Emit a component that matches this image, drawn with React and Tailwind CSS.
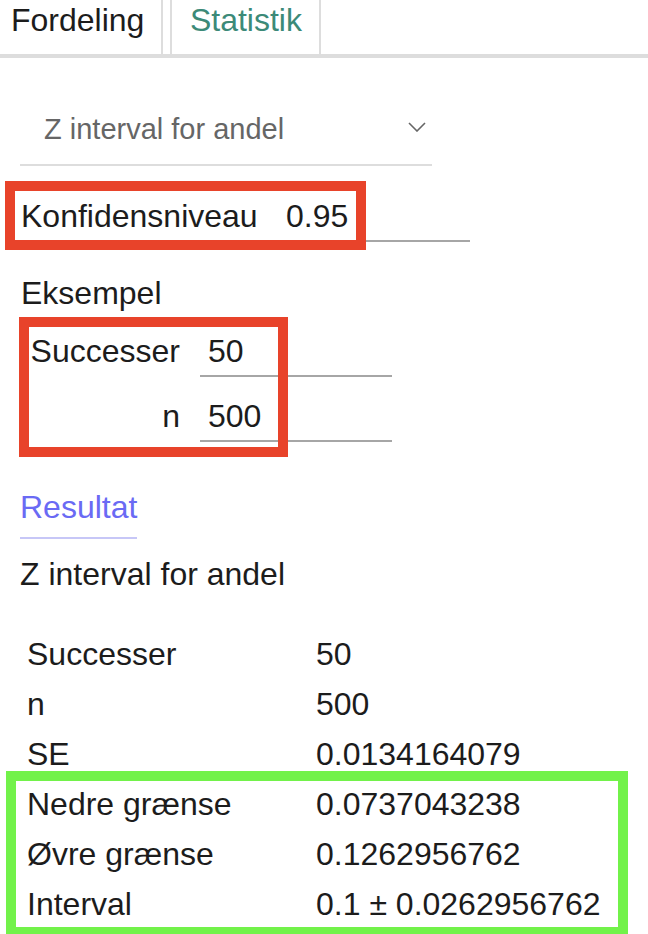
import React from 'react';

const rows = [
  ['Successer', '50'],
  ['n', '500'],
  ['SE', '0.0134164079'],
  ['Nedre grænse', '0.0737043238'],
  ['Øvre grænse', '0.1262956762'],
  ['Interval', '0.1 ± 0.0262956762'],
];

const Field = ({ value }) => (
  <div className="w-[192px] pl-[8px] pb-[4px] leading-[40px] border-b-2 border-[#a6a6a6]">{value}</div>
);

const App = () => {
  return (
    <div className="w-[648px] h-[934px] overflow-hidden bg-white text-[#1c1c1c] text-[32px] font-['Liberation_Sans',Arial,sans-serif]">
      {/* tabs */}
      <div className="flex h-[58px] border-b-4 border-[#dddddd]">
        <div className="pl-[11px] pr-[17px] leading-[40px] border-r-2 border-[#dddddd]">Fordeling</div>
        <div className="ml-[7px] w-[151px] text-center leading-[40px] text-[#3c8a78] border-x-2 border-[#dddddd]">Statistik</div>
      </div>

      <div className="px-[20px]">
        {/* select */}
        <div className="mt-[39px] w-[412px] flex items-center justify-between pl-[24px] pr-[6px] pt-[15px] pb-[18px] border-b-2 border-[#dddddd]">
          <span className="text-[29px] leading-[34px] text-[#666666]">Z interval for andel</span>
          <svg width="18" height="10" viewBox="0 0 18 10" className="mt-[-4px]">
            <polyline points="1,1 9,9 17,1" fill="none" stroke="#666" strokeWidth="1.6" />
          </svg>
        </div>

        {/* konfidensniveau */}
        <div className="relative mt-[30px] flex items-baseline">
          <div className="leading-[40px] w-[258px] pl-[1px]">Konfidensniveau</div>
          <Field value="0.95" />
          <div className="absolute left-[-15px] top-[-15px] w-[361px] h-[69px] border-[10px] border-[#e8432a]" />
        </div>

        <div className="mt-[31px] leading-[40px] pl-[1px]">Eksempel</div>

        {/* eksempel inputs */}
        <div className="relative mt-[18px] flex flex-col gap-[19px]">
          <div className="flex items-baseline">
            <div className="w-[160px] mr-[20px] text-right leading-[40px]">Successer</div>
            <Field value="50" />
          </div>
          <div className="flex items-baseline">
            <div className="w-[160px] mr-[20px] text-right leading-[40px]">n</div>
            <Field value="500" />
          </div>
          <div className="absolute left-[-1px] top-[-14px] w-[269px] h-[140px] border-[10px] border-[#e8432a]" />
        </div>

        {/* resultat */}
        <div className="mt-[41px]">
          <span className="inline-block leading-[40px] pb-[10px] border-b-2 border-[#c7c7f7] text-[#6a6af4]">Resultat</span>
        </div>
        <div className="mt-[15px] leading-[40px]">Z interval for andel</div>

        <div className="relative mt-[35px] pl-[7px]">
          {rows.map(([label, value]) => (
            <div key={label} className="grid grid-cols-[289px_1fr] leading-[50px]">
              <div>{label}</div>
              <div>{value}</div>
            </div>
          ))}
          <div className="absolute left-[-14px] top-[142px] w-[622px] h-[166px] border-[10px] border-[#72f24a]" />
        </div>
      </div>
    </div>
  );
};

export default App;
